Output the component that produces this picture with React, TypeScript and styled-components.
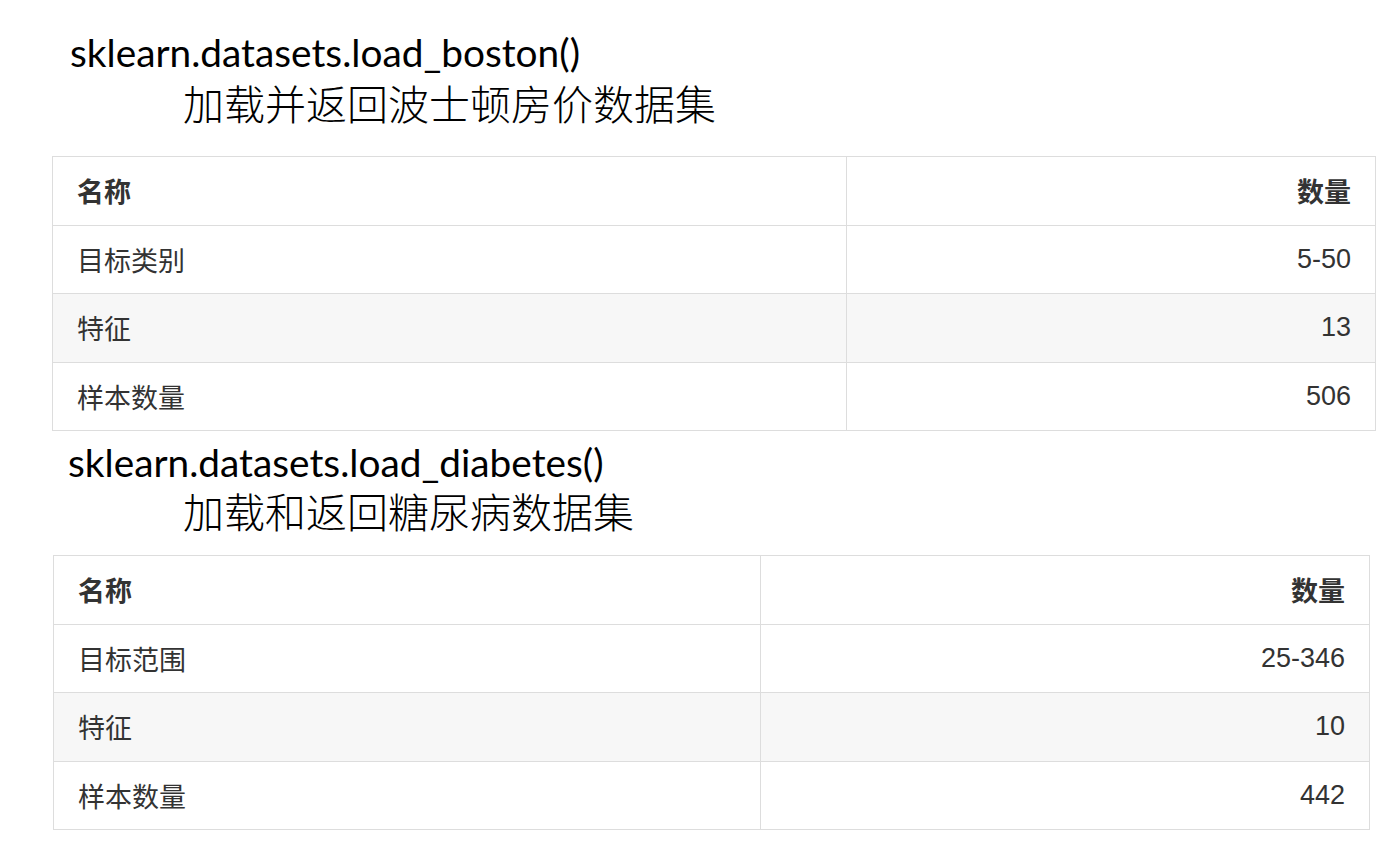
import styled, { createGlobalStyle } from "styled-components";

const GlobalStyle = createGlobalStyle`
  html, body {
    margin: 0;
    padding: 0;
    background: #ffffff;
  }
`;

const Page = styled.div`
  padding: 32px 0 0 52px;
`;

const Section = styled.section<{ top: number }>`
  display: flex;
  flex-direction: column;
  margin-top: ${(p) => p.top}px;
`;

const FuncName = styled.div<{ offset: number }>`
  font-family: Lato, "Open Sans", sans-serif;
  font-size: 38.8px;
  line-height: 40px;
  color: #000;
  padding-left: ${(p) => p.offset}px;
`;

const FuncDesc = styled.div<{ above: number; below: number }>`
  font-family: "Noto Sans CJK SC", sans-serif;
  font-weight: 300;
  font-size: 41px;
  line-height: 48px;
  color: #000;
  padding-left: 131px;
  margin-top: ${(p) => p.above}px;
  margin-bottom: ${(p) => p.below}px;
`;

const Table = styled.table<{ width: number; shift: number }>`
  width: ${(p) => p.width}px;
  border-collapse: collapse;
  font-family: "Liberation Sans", "Noto Sans CJK SC", sans-serif;
  font-size: 27px;
  color: #333;
  margin-left: ${(p) => p.shift}px;
`;

const Row = styled.tr<{ striped?: boolean }>`
  height: 68.5px;
  background: ${(p) => (p.striped ? "#f7f7f7" : "#fff")};
`;

const HeadCell = styled.th<{ right?: boolean; w?: number }>`
  border: 1px solid #dddddd;
  padding: 0 24px;
  font-weight: 700;
  text-align: ${(p) => (p.right ? "right" : "left")};
  width: ${(p) => (p.w ? `${p.w - 49}px` : "auto")};
`;

const Cell = styled.td<{ right?: boolean }>`
  border: 1px solid #dddddd;
  padding: 0 24px;
  text-align: ${(p) => (p.right ? "right" : "left")};
`;

type Dataset = {
  func: string;
  desc: string;
  offset: number;
  shift: number;
  width: number;
  firstCol: number;
  top: number;
  above: number;
  below: number;
  rows: [string, string][];
};

const data: Dataset[] = [
  {
    func: "sklearn.datasets.load_boston()",
    desc: "加载并返回波士顿房价数据集",
    offset: 18,
    shift: 0,
    width: 1324,
    firstCol: 794,
    top: 0,
    above: 6,
    below: 30,
    rows: [
      ["目标类别", "5-50"],
      ["特征", "13"],
      ["样本数量", "506"],
    ],
  },
  {
    func: "sklearn.datasets.load_diabetes()",
    desc: "加载和返回糖尿病数据集",
    offset: 16,
    shift: 1,
    width: 1317,
    firstCol: 707,
    top: 11,
    above: 4,
    below: 21,
    rows: [
      ["目标范围", "25-346"],
      ["特征", "10"],
      ["样本数量", "442"],
    ],
  },
];

function DatasetTable({ d }: { d: Dataset }) {
  return (
    <Section top={d.top}>
      <FuncName offset={d.offset}>{d.func}</FuncName>
      <FuncDesc above={d.above} below={d.below}>
        {d.desc}
      </FuncDesc>
      <Table width={d.width} shift={d.shift}>
        <thead>
          <Row>
            <HeadCell w={d.firstCol}>名称</HeadCell>
            <HeadCell right>数量</HeadCell>
          </Row>
        </thead>
        <tbody>
          {d.rows.map(([name, value], i) => (
            <Row key={name} striped={i === 1}>
              <Cell>{name}</Cell>
              <Cell right>{value}</Cell>
            </Row>
          ))}
        </tbody>
      </Table>
    </Section>
  );
}

export default function App() {
  return (
    <>
      <GlobalStyle />
      <Page>
        {data.map((d) => (
          <DatasetTable key={d.func} d={d} />
        ))}
      </Page>
    </>
  );
}
